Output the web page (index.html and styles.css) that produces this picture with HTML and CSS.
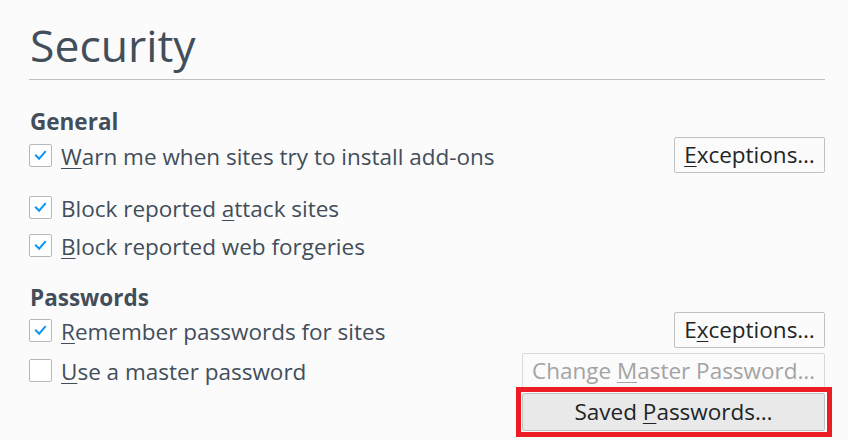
FILE: index.html
```html
<!DOCTYPE html>
<html>
<head>
<meta charset="utf-8">
<link rel="stylesheet" href="styles.css">
</head>
<body>
<div class="page">
  <div class="title"><h1>Security</h1></div>

  <div class="caption cap-general">General</div>
  <div class="row row1">
    <label class="check"><span class="box on"><svg viewBox="0 0 23 23"><path d="M6.5 11.5 L10 15 L16.5 7.5" /></svg></span><span class="label"><u>W</u>arn me when sites try to install add-ons</span></label>
    <button class="btn"><u>E</u>xceptions…</button>
  </div>
  <div class="row row2">
    <label class="check"><span class="box on"><svg viewBox="0 0 23 23"><path d="M6.5 11.5 L10 15 L16.5 7.5" /></svg></span><span class="label">Block reported <u>a</u>ttack sites</span></label>
  </div>
  <div class="row row3">
    <label class="check"><span class="box on"><svg viewBox="0 0 23 23"><path d="M6.5 11.5 L10 15 L16.5 7.5" /></svg></span><span class="label"><u>B</u>lock reported web forgeries</span></label>
  </div>

  <div class="caption cap-passwords">Passwords</div>
  <div class="row row4">
    <label class="check"><span class="box on"><svg viewBox="0 0 23 23"><path d="M6.5 11.5 L10 15 L16.5 7.5" /></svg></span><span class="label"><u>R</u>emember passwords for sites</span></label>
    <button class="btn">E<u>x</u>ceptions…</button>
  </div>
  <div class="row row5">
    <label class="check"><span class="box"></span><span class="label"><u>U</u>se a master password</span></label>
    <button class="btn wide disabled">Change <u>M</u>aster Password…</button>
  </div>
  <div class="row row6">
    <div class="highlight"><button class="btn wide saved">Saved <u>P</u>asswords…</button></div>
  </div>
</div>
</body>
</html>
```

FILE: styles.css
```css
html, body {
  margin: 0;
  padding: 0;
  background: #fbfbfb;
}
body {
  font-family: "Open Sans", "Noto Sans", sans-serif;
  color: #424e5a;
  width: 848px;
  height: 440px;
  overflow: hidden;
}
.page {
  padding: 0 23px 0 29px;
}
.title {
  height: 79px;
  border-bottom: 1px solid #c1c1c1;
  display: flex;
  align-items: flex-end;
}
h1 {
  margin: 0 0 4px 1px;
  font-size: 44.5px;
  font-weight: 400;
  line-height: 60px;
}
.caption {
  font-weight: 700;
  font-size: 22.5px;
  height: 24px;
  line-height: 24px;
  padding-left: 1px;
}
.cap-general { margin-top: 30px; }
.cap-passwords { margin-top: 23px; }
.row {
  display: flex;
  align-items: center;
  justify-content: space-between;
  height: 36px;
}
.row1 { margin-top: 3px; }
.row2 { margin-top: 16px; }
.row3 { margin-top: 2px; }
.row4 { margin-top: 2px; }
.row5 { margin-top: 5px; height: 34px; }
.row6 { height: 50px; justify-content: flex-end; margin-right: -7px; }
.check {
  display: flex;
  align-items: center;
  font-size: 22.5px;
}
.label {
  line-height: 30px;
  padding-top: 4px;
}
.box {
  width: 21px;
  height: 21px;
  border: 1px solid #b8b8b8;
  border-radius: 2px;
  background: #fff;
  margin-right: 9px;
  display: flex;
}
.box svg {
  width: 21px;
  height: 21px;
  fill: none;
  stroke: #0996f8;
  stroke-width: 2.2;
  stroke-linecap: square;
}
u {
  text-decoration-thickness: 1px;
  text-underline-offset: 3px;
}
.btn {
  font-family: inherit;
  font-size: 22.5px;
  color: #222426;
  background: #fbfbfb;
  border: 1px solid #c1c1c1;
  border-radius: 2px;
  height: 36px;
  padding: 0 6px;
  margin: 0;
  width: 151px;
  line-height: 34px;
  white-space: nowrap;
}
.btn.wide { width: 303px; }
.btn.disabled {
  color: #a3a3a3;
  height: 35px;
  border-color: #dadada;
}
.highlight {
  border: 5px solid #ed1c24;
  padding: 1px 2px 1px 1px;
  display: flex;
}
.btn.saved {
  background: #e9e9e9;
  height: 38px;
}
```
